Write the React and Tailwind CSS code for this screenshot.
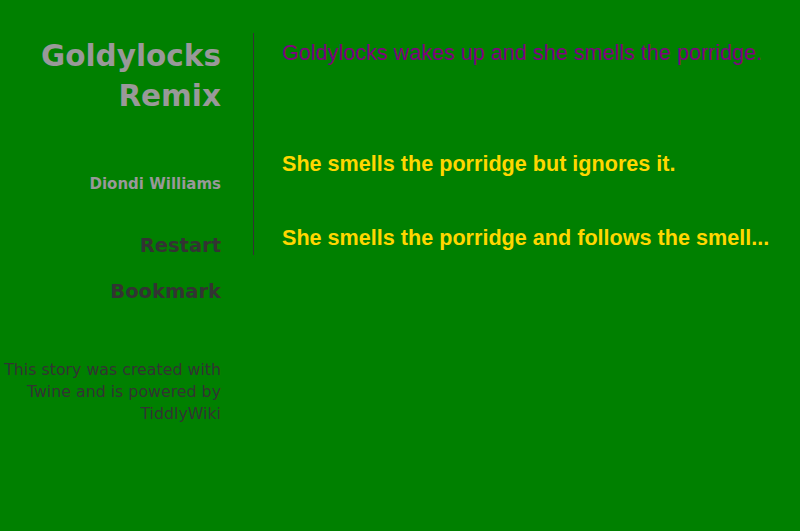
import React from "react";

const sideFont = { fontFamily: '"DejaVu Sans", Verdana, sans-serif' };

const App = () => {
  return (
    <div className="min-h-screen w-full bg-[#008000] flex items-start" style={{ fontFamily: '"Liberation Sans", Arial, sans-serif' }}>
      {/* Sidebar */}
      <div className="w-[221px] shrink-0 text-right pt-[36px]" style={sideFont}>
        <h1 className="text-[29.5px] leading-[40px] font-bold text-[#999999]">
          Goldylocks Remix
        </h1>
        <p className="mt-[57px] text-[15px] font-bold text-[#999999]">Diondi Williams</p>
        <div className="mt-[35px] flex flex-col gap-[17px] text-[19.5px] font-bold text-[#333333]">
          <span>Restart</span>
          <span>Bookmark</span>
        </div>
        <p className="mt-[53px] text-[15.8px] leading-[22px] text-[#333333]">
          This story was created with Twine and is powered by TiddlyWiki
        </p>
      </div>

      {/* Passages */}
      <div className="ml-[32px] mt-[33px] border-l border-[#333333] pl-[28px] h-[222px]">
        <p className="mt-[7px] text-[21.6px] leading-[26px] text-[#800080]">
          Goldylocks wakes up and she smells the porridge.
        </p>
        <div className="mt-[85px] flex flex-col gap-[48px] text-[21.6px] leading-[26px] font-bold text-[#ffd700]">
          <span>She smells the porridge but ignores it.</span>
          <span>She smells the porridge and follows the smell...</span>
        </div>
      </div>
    </div>
  );
};

export default App;
